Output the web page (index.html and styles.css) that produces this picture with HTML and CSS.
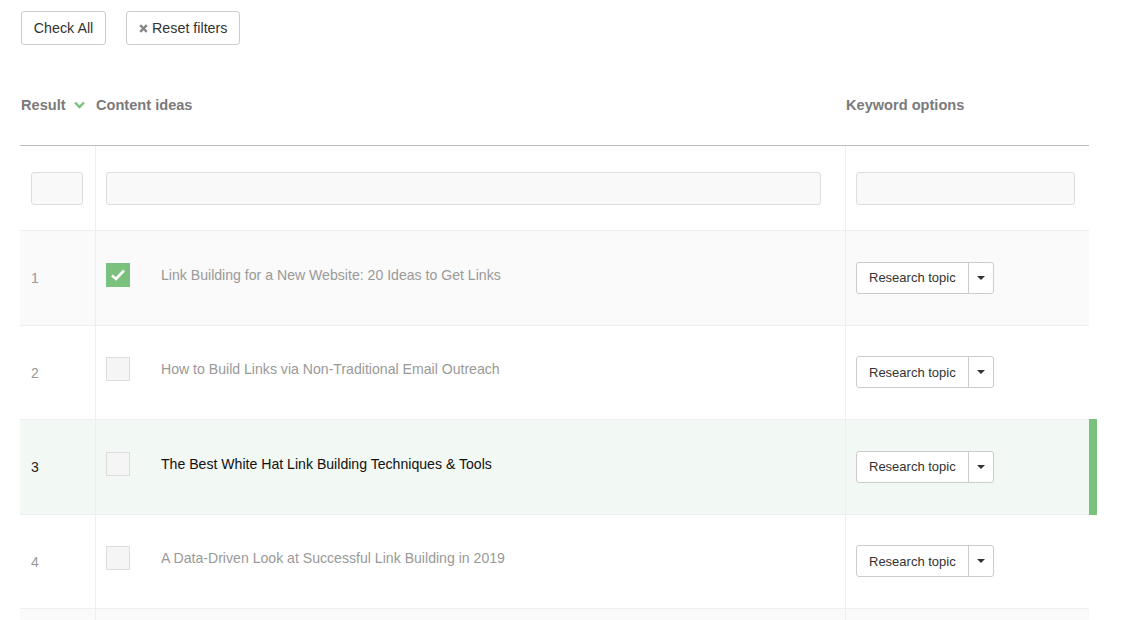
FILE: index.html
```html
<!DOCTYPE html>
<html>
<head>
<meta charset="utf-8">
<link rel="stylesheet" href="styles.css">
</head>
<body>
<div class="page">
  <div class="toolbar">
    <button class="btn">Check All</button>
    <button class="btn"><svg class="x" width="9" height="9" viewBox="0 0 9 9"><path d="M1.2 1.2 L7.8 7.8 M7.8 1.2 L1.2 7.8" stroke="#888" stroke-width="2.4" stroke-linecap="butt"/></svg>Reset filters</button>
  </div>
  <div class="heads">
    <div class="h-result">Result <svg class="chev" width="11" height="8" viewBox="0 0 11 8"><path d="M1 1.5 L5.5 6 L10 1.5" fill="none" stroke="#7bc17e" stroke-width="2.4"/></svg></div>
    <div class="h-content">Content ideas</div>
    <div class="h-kw">Keyword options</div>
  </div>
  <div class="table">
    <div class="row filter">
      <div class="c c1"><div class="inp i1"></div></div>
      <div class="c c2"><div class="inp i2"></div></div>
      <div class="c c3"><div class="inp i3"></div></div>
    </div>
    <div class="row alt">
      <div class="c c1 num">1</div>
      <div class="c c2"><span class="cb checked"><svg width="16" height="14" viewBox="0 0 16 14"><path d="M2 7.5 L6 11 L14 2.5" fill="none" stroke="#fff" stroke-width="2.6"/></svg></span><span class="title">Link Building for a New Website: 20 Ideas to Get Links</span></div>
      <div class="c c3"><div class="split"><span class="main">Research topic</span><span class="caret"></span></div></div>
    </div>
    <div class="row">
      <div class="c c1 num">2</div>
      <div class="c c2"><span class="cb"></span><span class="title">How to Build Links via Non-Traditional Email Outreach</span></div>
      <div class="c c3"><div class="split"><span class="main">Research topic</span><span class="caret"></span></div></div>
    </div>
    <div class="row active">
      <div class="c c1 num">3</div>
      <div class="c c2"><span class="cb"></span><span class="title">The Best White Hat Link Building Techniques &amp; Tools</span></div>
      <div class="c c3"><div class="split"><span class="main">Research topic</span><span class="caret"></span></div></div>
    </div>
    <div class="row">
      <div class="c c1 num">4</div>
      <div class="c c2"><span class="cb"></span><span class="title">A Data-Driven Look at Successful Link Building in 2019</span></div>
      <div class="c c3"><div class="split"><span class="main">Research topic</span><span class="caret"></span></div></div>
    </div>
    <div class="row alt">
      <div class="c c1 num"></div>
      <div class="c c2"></div>
      <div class="c c3"></div>
    </div>
  </div>
</div>
</body>
</html>
```
FILE: styles.css
```css
* { box-sizing: border-box; }
html, body { margin: 0; padding: 0; background: #fff; overflow: hidden; }
body { font-family: "Liberation Sans", Arial, sans-serif; color: #333; }
.page { padding: 11px 0 0 20px; width: 1100px; height: 620px; overflow: hidden; }
.toolbar { display: flex; gap: 20px; padding-left: 1px; }
.btn {
  font-family: "Liberation Sans", Arial, sans-serif;
  font-size: 14.3px; color: #333; background: #fff;
  border: 1px solid #ccc; border-radius: 3px; white-space: nowrap;
  height: 34px; padding: 0 12px; display: flex; align-items: center;
}
.btn:first-child { width: 85px; justify-content: center; padding: 0; }
.btn .x { margin-right: 4px; margin-left: 0; }
.heads {
  display: grid; grid-template-columns: 76px 750px 243px;
  height: 100px; align-items: center; padding-top: 19px;
  font-size: 14.6px; font-weight: bold; color: #7a7a7a;
}
.h-result { padding-left: 1px; display: flex; align-items: center; }
.chev { margin-left: 8px; }
.table { width: 1069px; border-top: 1px solid #bbb; }
.row {
  display: grid; grid-template-columns: 76px 750px 243px;
  height: 94.5px; border-bottom: 1px solid #eee; position: relative;
}
.row.filter { height: 85px; }
.row.alt { background: #fafafa; }
.row.active { background: #f2f8f4; }
.row.active::after {
  content: ""; position: absolute; right: -8px; top: -1px; bottom: -1px;
  width: 8px; background: #7bc17e;
}
.c { display: flex; align-items: center; }
.c1 { border-right: 1px solid #eee; padding-left: 11px; }
.c2 { border-right: 1px solid #eee; padding-left: 10px; padding-bottom: 6px; }
.c3 { padding-left: 10px; }
.filter .c { padding-bottom: 0; padding-top: 0; }
.inp { height: 33px; background: #f9f9f9; border: 1px solid #ddd; border-radius: 3px; }
.i1 { width: 52px; }
.i2 { width: 715px; }
.i3 { width: 219px; }
.num { font-size: 14px; color: #999; padding-top: 1px; }
.active .num { color: #222; }
.cb {
  width: 24px; height: 24px; border: 1px solid #ddd; background: #f5f5f5;
  display: inline-flex; align-items: center; justify-content: center; flex: none;
}
.cb.checked { background: #7bc17e; border-color: #7bc17e; }
.title { margin-left: 31px; font-size: 14.1px; color: #999; }
.active .title { color: #111; }
.split {
  display: flex; height: 32px; border: 1px solid #ccc; border-radius: 3px;
  background: #fff; font-size: 13px; color: #333;
}
.split .main { display: flex; align-items: center; padding: 0 12px; border-right: 1px solid #ccc; width: 112px; }
.split .caret { width: 24px; display: flex; align-items: center; justify-content: center; }
.split .caret::before {
  content: ""; border-left: 4px solid transparent; border-right: 4px solid transparent;
  border-top: 4px solid #333;
}
```
